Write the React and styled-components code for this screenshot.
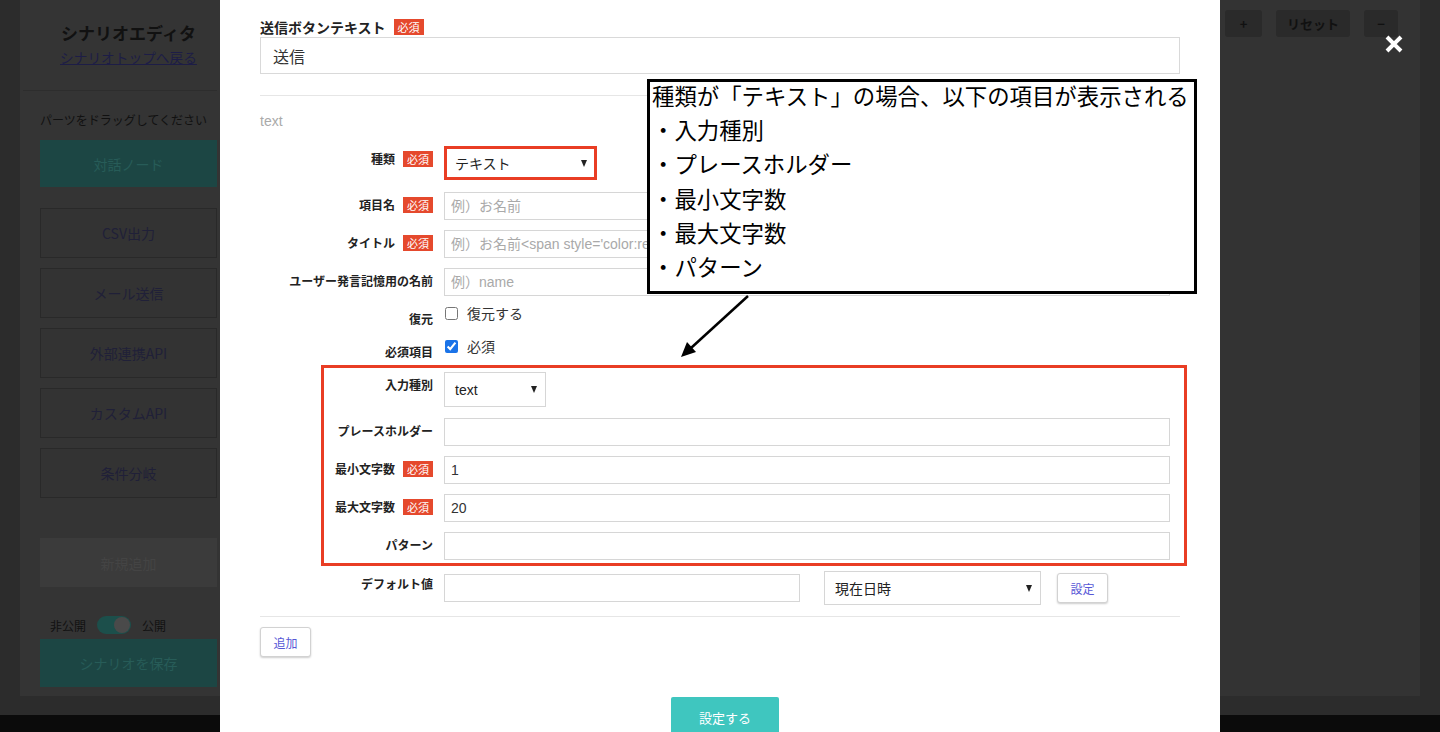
import React from 'react'
import styled, { createGlobalStyle } from 'styled-components'

const GlobalStyle = createGlobalStyle`
    html, body {
        margin: 0;
        padding: 0;
        height: 100%;
        overflow: hidden;
    }
    body {
        font-family: "Liberation Sans", "Noto Sans CJK JP", sans-serif;
        color: #222;
    }
    * {
        box-sizing: border-box;
    }
`

const sideParts = ['CSV出力', 'メール送信', '外部連携API', 'カスタムAPI', '条件分岐']

const Badge = () => <Required>必須</Required>

const Caret = () => <CaretMark />

class App extends React.Component {
    render() {
        return (
            <>
                <GlobalStyle />
                <Backdrop>
                    <Workspace>
                        <Sidebar>
                            <EditorTitle>シナリオエディタ</EditorTitle>
                            <BackLink>シナリオトップへ戻る</BackLink>
                            <SideRule />
                            <Hint>パーツをドラッグしてください</Hint>
                            <PartButton $tone='teal' $mt={12} $h={47}>対話ノード</PartButton>
                            {sideParts.map((p, i) => (
                                <PartButton key={p} $tone='outline' $mt={i === 0 ? 21 : 10} $h={50}>{p}</PartButton>
                            ))}
                            <PartButton $tone='gray' $mt={40} $h={49}>新規追加</PartButton>
                            <PublishRow>
                                <span>非公開</span>
                                <Track><Knob /></Track>
                                <span>公開</span>
                            </PublishRow>
                            <PartButton $tone='teal' $mt={5} $h={48}>シナリオを保存</PartButton>
                        </Sidebar>
                        <Canvas>
                            <ZoomBar>
                                <ZoomButton $w={37}>+</ZoomButton>
                                <ZoomButton $w={74}>リセット</ZoomButton>
                                <ZoomButton $w={34}>−</ZoomButton>
                            </ZoomBar>
                        </Canvas>
                    </Workspace>
                    <BottomBar />
                </Backdrop>

                <Overlay>
                    <Modal>
                        <TopLabel>送信ボタンテキスト<Badge /></TopLabel>
                        <WideInput defaultValue='送信' />
                        <Rule />
                        <SectionName>text</SectionName>

                        <Field $label={173} $mb={12}>
                            <Label>種類<Badge /></Label>
                            <SelectBox $w={153} $h={34} $marked>
                                テキスト<Caret />
                            </SelectBox>
                        </Field>
                        <Field $label={173}>
                            <Label>項目名<Badge /></Label>
                            <TextInput placeholder='例）お名前' />
                        </Field>
                        <Field $label={173}>
                            <Label>タイトル<Badge /></Label>
                            <TextInput placeholder="例）お名前<span style='color:red'>*</span>" />
                        </Field>
                        <Field $label={173}>
                            <Label>ユーザー発言記憶用の名前</Label>
                            <TextInput placeholder='例）name' />
                        </Field>
                        <Field $label={173} $mb={12}>
                            <Label>復元</Label>
                            <CheckLine>
                                <input type='checkbox' />
                                復元する
                            </CheckLine>
                        </Field>
                        <Field $label={173} $mb={5}>
                            <Label>必須項目</Label>
                            <CheckLine>
                                <input type='checkbox' defaultChecked />
                                必須
                            </CheckLine>
                        </Field>

                        <Highlight>
                            <Field $label={109} $pr={14} $mb={11}>
                                <Label>入力種別</Label>
                                <SelectBox $w={102} $h={35}>
                                    text<Caret />
                                </SelectBox>
                            </Field>
                            <Field $label={109} $pr={14}>
                                <Label>プレースホルダー</Label>
                                <TextInput />
                            </Field>
                            <Field $label={109} $pr={14}>
                                <Label>最小文字数<Badge /></Label>
                                <TextInput defaultValue='1' />
                            </Field>
                            <Field $label={109} $pr={14}>
                                <Label>最大文字数<Badge /></Label>
                                <TextInput defaultValue='20' />
                            </Field>
                            <Field $label={109} $pr={14} $mb={0}>
                                <Label>パターン</Label>
                                <TextInput />
                            </Field>
                        </Highlight>

                        <Field $label={173} $mb={11}>
                            <Label>デフォルト値</Label>
                            <DefaultLine>
                                <TextInput style={{ width: 356, marginTop: 3 }} />
                                <SelectBox $w={217} $h={34}>
                                    現在日時<Caret />
                                </SelectBox>
                                <SmallButton $w={51}>設定</SmallButton>
                            </DefaultLine>
                        </Field>
                        <Rule $flush />
                        <SmallButton $w={51} $top={10}>追加</SmallButton>
                        <Footer>
                            <SubmitButton>設定する</SubmitButton>
                        </Footer>

                        <Callout>
                            <CalloutText>
                                <div>種類が「テキスト」の場合、以下の項目が表示される</div>
                                <div>・入力種別</div>
                                <div>・プレースホルダー</div>
                                <div>・最小文字数</div>
                                <div>・最大文字数</div>
                                <div>・パターン</div>
                            </CalloutText>
                        </Callout>
                        <Pointer width='80' height='75' viewBox='0 0 80 75'>
                            <line x1='73' y1='6' x2='16' y2='58' stroke='#000' strokeWidth='2.5' />
                            <polygon points='6,67 21,62 12,52' fill='#000' />
                        </Pointer>
                    </Modal>
                    <CloseIcon width='20' height='20' viewBox='0 0 20 20'>
                        <path d='M3 3 L17 17 M17 3 L3 17' stroke='#fff' strokeWidth='4' />
                    </CloseIcon>
                </Overlay>
            </>
        )
    }
}

export default App

/* dimmed editor behind the dialog */
const Backdrop = styled.div`
    width: 100vw;
    height: 100vh;
    background: #2c2c2c;
    display: flex;
    flex-direction: column;
`
const Workspace = styled.div`
    flex: 1;
    display: flex;
    padding: 0 20px;
`
const BottomBar = styled.div`
    height: 17px;
    background: #0b0b0b;
`
const Sidebar = styled.aside`
    width: 217px;
    height: 696px;
    background: #343434;
    padding: 0 20px;
    display: flex;
    flex-direction: column;
    color: #111;
    font-family: "Noto Sans CJK JP", sans-serif;
`
const EditorTitle = styled.div`
    margin-top: 20px;
    font-size: 17px;
    font-weight: 700;
    line-height: 26px;
    text-align: center;
    white-space: nowrap;
`
const BackLink = styled.a`
    margin-top: 1px;
    font-size: 13.7px;
    line-height: 20px;
    color: #1d1d46;
    text-decoration: underline;
    text-align: center;
    white-space: nowrap;
`
const SideRule = styled.div`
    margin: 23px 0 0 -17px;
    height: 1px;
    background: #2d2d2d;
`
const Hint = styled.div`
    margin-top: 21px;
    font-size: 12px;
    line-height: 16px;
    white-space: nowrap;
`
const tones = {
    teal: 'background: #1c4644; color: #275c58; border: none;',
    outline: 'background: #333; color: #202038; border: 1px solid #292929;',
    gray: 'background: #3b3b3b; color: #444; border: none;',
}
const PartButton = styled.div`
    height: ${p => p.$h}px;
    margin-top: ${p => p.$mt}px;
    display: flex;
    align-items: center;
    justify-content: center;
    font-size: 14px;
    white-space: nowrap;
    ${p => tones[p.$tone]}
`
const PublishRow = styled.div`
    margin-top: 29px;
    padding-left: 10px;
    height: 18px;
    display: flex;
    align-items: center;
    gap: 11px;
    font-size: 12px;
`
const Track = styled.div`
    width: 34px;
    height: 18px;
    border-radius: 9px;
    background: #1c4f4b;
    position: relative;
`
const Knob = styled.div`
    position: absolute;
    right: 1px;
    top: 1px;
    width: 16px;
    height: 16px;
    border-radius: 50%;
    background: #4a4a4a;
`
const Canvas = styled.main`
    flex: 1;
    height: 696px;
    background: #333;
`
const ZoomBar = styled.div`
    display: flex;
    justify-content: flex-end;
    gap: 14px;
    padding: 10px 22px 0 0;
`
const ZoomButton = styled.div`
    width: ${p => p.$w}px;
    height: 27px;
    border-radius: 3px;
    background: #2a2a2a;
    color: #111;
    font-size: 13px;
    font-weight: 700;
    font-family: "Noto Sans CJK JP", sans-serif;
    display: flex;
    align-items: center;
    justify-content: center;
`

/* dialog */
const Overlay = styled.div`
    position: fixed;
    inset: 0;
    display: flex;
    justify-content: center;
`
const Modal = styled.div`
    position: relative;
    width: 1000px;
    height: 100%;
    background: #fff;
    padding: 19px 40px 0;
    overflow: hidden;
`
const CloseIcon = styled.svg`
    position: absolute;
    top: 34px;
    right: 36px;
`
const Required = styled.span`
    display: inline-block;
    height: 16px;
    padding: 0 4px;
    background: #e5492d;
    color: #fff;
    font-size: 11px;
    font-weight: 400;
    line-height: 16px;
    font-family: "Noto Sans CJK JP", sans-serif;
`
const TopLabel = styled.div`
    display: flex;
    align-items: center;
    gap: 8px;
    height: 16px;
    font-size: 14px;
    font-weight: 700;
    font-family: "Noto Sans CJK JP", sans-serif;
    color: #222;
`
const WideInput = styled.input`
    display: block;
    width: 100%;
    height: 37px;
    margin-top: 2px;
    padding: 0 12px;
    border: 1px solid #d9d9d9;
    font-size: 16px;
    font-family: "Noto Sans CJK JP", sans-serif;
    color: #333;
    outline: none;
`
const Rule = styled.div`
    height: 1px;
    background: #e6e6e6;
    margin-top: ${p => (p.$flush ? 0 : 21)}px;
`
const SectionName = styled.div`
    margin: 17px 0;
    font-size: 14px;
    line-height: 16px;
    color: #aaa;
`
const Field = styled.div`
    display: grid;
    grid-template-columns: ${p => p.$label}px 1fr;
    column-gap: 11px;
    align-items: start;
    padding-right: ${p => p.$pr ?? 10}px;
    margin-bottom: ${p => p.$mb ?? 10}px;
`
const Label = styled.div`
    display: flex;
    justify-content: flex-end;
    align-items: center;
    gap: 8px;
    padding-top: 5px;
    line-height: 16px;
    font-size: 12px;
    font-weight: 700;
    color: #222;
    font-family: "Noto Sans CJK JP", sans-serif;
    white-space: nowrap;
`
const TextInput = styled.input`
    display: block;
    width: 100%;
    height: 28px;
    padding: 0 6px;
    border: 1px solid #d6d6d6;
    font-size: 14px;
    color: #333;
    font-family: "Liberation Sans", "Noto Sans CJK JP", sans-serif;
    outline: none;
    &::placeholder {
        color: #a9a9a9;
    }
`
const SelectBox = styled.div`
    width: ${p => p.$w}px;
    height: ${p => p.$h}px;
    display: flex;
    align-items: center;
    justify-content: space-between;
    padding: 0 ${p => (p.$marked ? 7 : 8)}px 0 ${p => (p.$marked ? 8 : 10)}px;
    border: ${p => (p.$marked ? '3px solid #e93d24' : '1px solid #d6d6d6')};
    font-size: 14px;
    color: #222;
    font-family: "Liberation Sans", "Noto Sans CJK JP", sans-serif;
    background: #fff;
`
const CaretMark = styled.span`
    width: 0;
    height: 0;
    border-left: 3.5px solid transparent;
    border-right: 3.5px solid transparent;
    border-top: 7px solid #222;
`
const CheckLine = styled.label`
    display: flex;
    align-items: center;
    gap: 9px;
    height: 14px;
    font-size: 14px;
    color: #333;
    font-family: "Noto Sans CJK JP", sans-serif;
    input {
        width: 13px;
        height: 13px;
        margin: 0 0 0 1px;
        accent-color: #1a73e8;
    }
`
const Highlight = styled.div`
    margin: 0 -7px 5px 61px;
    padding: 4px 0 3px;
    border: 3px solid #e93d24;
`
const DefaultLine = styled.div`
    display: flex;
    align-items: flex-start;
    & > :nth-child(2) { margin-left: 24px; }
    & > :nth-child(3) { margin: 2px 0 0 16px; }
`
const SmallButton = styled.button`
    display: block;
    width: ${p => p.$w}px;
    height: 30px;
    margin-top: ${p => p.$top ?? 0}px;
    padding: 0;
    background: #fff;
    border: 1px solid #d2d2d2;
    border-radius: 3px;
    box-shadow: 0 1px 2px rgba(0, 0, 0, 0.2);
    color: #5757d6;
    font-size: 12px;
    font-family: "Noto Sans CJK JP", sans-serif;
`
const Footer = styled.div`
    display: flex;
    justify-content: center;
    margin-top: 40px;
    padding-left: 10px;
`
const SubmitButton = styled.button`
    width: 108px;
    height: 40px;
    border: none;
    border-radius: 2px;
    background: #3fc6bf;
    color: #fff;
    font-size: 13px;
    font-family: "Noto Sans CJK JP", sans-serif;
`

/* callout note drawn over the form */
const Callout = styled.div`
    position: absolute;
    left: 427px;
    top: 79px;
    width: 550px;
    height: 215px;
    border: 3px solid #000;
    background: #fff;
    padding: 0 2px;
    overflow: hidden;
`
const CalloutText = styled.div`
    margin-top: -4px;
    font-size: 22.4px;
    line-height: 34.2px;
    color: #000;
    font-family: "Noto Sans CJK JP", sans-serif;
    white-space: nowrap;
`
const Pointer = styled.svg`
    position: absolute;
    left: 455px;
    top: 290px;
`
